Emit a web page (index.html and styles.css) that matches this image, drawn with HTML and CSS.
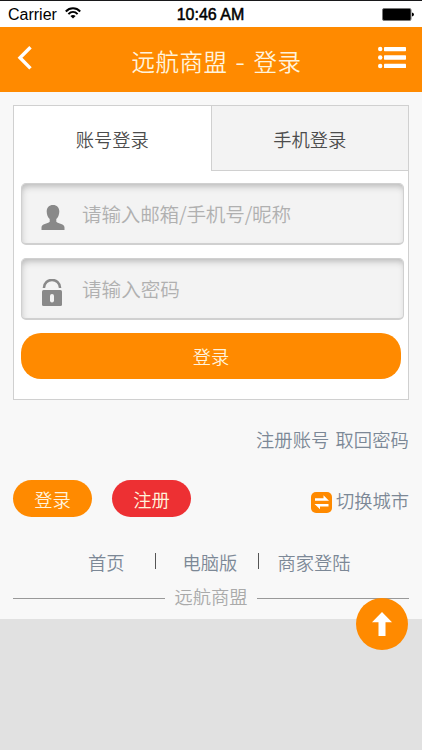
FILE: index.html
```html
<!DOCTYPE html>
<html lang="zh-CN">
<head>
<meta charset="utf-8">
<title>远航商盟 - 登录</title>
<link rel="stylesheet" href="styles.css">
</head>
<body>
<div class="status">
  <div class="carrier"><span>Carrier</span>
    <svg width="16" height="12" viewBox="0 0 16 12" fill="none" stroke="#000" stroke-width="2"><path d="M.8 4.500C4.900.300 11.100.300 15.200 4.500M3.400 7.100c2.700-2.700 6.500-2.700 9.200 0"/><path d="M8 11.600 5.400 9Q8 6.900 10.600 9Z" fill="#000" stroke="none"/></svg>
  </div>
  <span class="time">10:46 AM</span>
  <svg class="battery" width="32" height="13" viewBox="0 0 32 13"><rect x=".5" y=".5" width="28.5" height="12" rx="1.5" fill="#000" stroke="#777"/><path d="M30 4.500q2 .3 2 2t-2 2z"/></svg>
</div>
<header class="header">
  <svg class="back" width="16" height="24" viewBox="0 0 16 24" fill="none" stroke="#fff" stroke-width="3.4"><path d="M14.500 1.200 4 11.800l10.500 10.600"/></svg>
  <h1>远航商盟 <b>-</b> 登录</h1>
  <svg class="menu" width="28" height="23" viewBox="0 0 28 23" fill="#fff"><circle cx="2.2" cy="3" r="2.2"/><circle cx="2.2" cy="11.5" r="2.2"/><circle cx="2.2" cy="20" r="2.2"/><rect x="6" y="0.9" width="22" height="4.4" rx=".7"/><rect x="6" y="9.3" width="22" height="4.4" rx=".7"/><rect x="6" y="17.7" width="22" height="4.4" rx=".7"/></svg>
</header>
<main class="page">
  <section class="card">
    <nav class="tabs"><a class="tab">账号登录</a><a class="tab off">手机登录</a></nav>
    <form class="form">
      <div class="field">
        <svg width="24" height="25" viewBox="0 0 24 25" fill="#898989"><path d="M12 0c3.900 0 6.300 2.500 6.300 6.500 0 3.200-1.300 6-3 7.500v2.700c2 2 8.200 2 8.200 5.800V25H.5v-2.500c0-3.800 6.200-3.800 8.200-5.800V14c-1.700-1.500-3-4.300-3-7.500C5.700 2.500 8.100 0 12 0Z"/></svg>
        <span class="wide">请输入邮箱/手机号/昵称</span>
      </div>
      <div class="field">
        <svg width="24" height="27" viewBox="0 0 24 27"><path d="M2.900 9C3.200-1.700 18.800-1.700 19.100 9" fill="none" stroke="#898989" stroke-width="2.5"/><rect x="1" y="11" width="20" height="16" rx="1.5" fill="#898989"/><rect x="9" y="15" width="4" height="8.5" rx="2" fill="#f3f3f3"/></svg>
        <span>请输入密码</span>
      </div>
      <div class="submit">登录</div>
    </form>
  </section>
  <div class="links"><a>注册账号</a><a>取回密码</a></div>
  <div class="actions">
    <a class="pill">登录</a><a class="pill red">注册</a>
    <a class="city"><svg width="21" height="21" viewBox="0 0 21 21"><rect width="21" height="21" rx="5" fill="#ff8a00"/><path d="M4 6.200H12.500V3.200L18 8.800H4ZM17.500 14.500H9v2.800L3.500 11.900h14Z" fill="#fff"/></svg><span>切换城市</span></a>
  </div>
  <nav class="bottom"><a>首页</a><i></i><a>电脑版</a><i></i><a>商家登陆</a></nav>
  <div class="brand">远航商盟</div>
</main>
<a class="top"><svg width="20" height="24" viewBox="0 0 20 24"><path d="M10 0 20 10.300h-6.500V24h-7V10.300H0Z" fill="#fff"/></svg></a>
</body>
</html>
```
FILE: styles.css
```css
* { box-sizing: border-box; }
body {
  margin: 0;
  height: 750px;
  overflow: hidden;
  background: #e1e1e1;
  font: 350 18.3px/26px "Noto Sans CJK SC DemiLight", "Noto Sans CJK SC", sans-serif;
  color: #7c8896;
}
svg { display: block; flex: none; }
.status {
  height: 27px;
  border-top: 1px solid #18181a;
  background: #fff;
  display: grid;
  grid-template-columns: 1fr auto 1fr;
  align-items: center;
  padding: 1px 8px 0;
  color: #000;
  font: 400 16px/20px "Liberation Sans", sans-serif;
}
.carrier { display: flex; align-items: center; gap: 8px; }
.carrier svg { margin-top: -3px; }
.time { -webkit-text-stroke: .5px #000; margin-right: 1px; }
.battery { justify-self: end; }
.header {
  height: 65px;
  background: #ff8a00;
  display: flex;
  align-items: center;
  justify-content: space-between;
  padding: 0 16px;
  color: #fff3dc;
}
.header h1 { margin: 3px 0 0 23px; font-size: 23.5px; font-weight: 350; line-height: 34px; letter-spacing: .5px; word-spacing: 3px; }
.header b { display: inline-block; font-weight: 400; transform: scaleX(1.2); }
.back { margin-top: -3px; }
.menu { margin-top: -5px; }
.page { height: 527px; background: #f8f8f8; padding: 13px 13px 0; }
.card { height: 295px; width: 396px; border: 1px solid #d0d0d0; background: #fff; }
.tabs { display: flex; height: 65px; }
.tab { flex: 1; text-align: center; line-height: 66px; color: #4c4c4c; font-weight: 400; }
.off { background: #f3f3f3; border-left: 1px solid #d0d0d0; border-bottom: 1px solid #d0d0d0; }
.form { padding: 12px 4px 0 7px; }
.field {
  height: 62px;
  margin-bottom: 13px;
  border: 1px solid #d0d0d0;
  border-bottom-width: 2px;
  border-radius: 5px;
  background: #f3f3f3;
  box-shadow: inset 1px 4px 7px -2px #b4b4b4;
  display: flex;
  align-items: center;
  gap: 17px;
  padding-left: 19px;
  color: #b0b0b0;
  font-size: 19.6px;
}
.field svg { margin-top: 7px; }
.wide { letter-spacing: -.2px; }
.submit { width: 380px; height: 46px; border-radius: 20px; background: #ff8a00; color: #fff3dc; font-weight: 400; text-align: center; line-height: 46px; }
.links { display: flex; justify-content: flex-end; gap: 6px; margin-top: 26px; letter-spacing: .1px; }
.actions { display: flex; margin-top: 28px; height: 37px; }
.pill { width: 79px; height: 37px; margin-right: 20px; border-radius: 19px; background: #ff8a00; color: #fff3dc; text-align: center; line-height: 38px; }
.red { background: #ed3033; }
.city { display: flex; gap: 4px; margin-left: auto; line-height: 40px; }
.city svg { margin-top: 12px; }
.bottom { display: flex; margin: 32px 0 0 75px; }
.bottom i { width: 1px; height: 16px; background: #555; margin: 4px 27px 0 30px; }
.bottom i:nth-of-type(2) { margin: 4px 18px 0 21px; }
.brand { display: flex; align-items: center; gap: 9px; margin-top: 8px; color: #aaa; }
.brand::before, .brand::after { content: ""; flex: 1; height: 1px; background: #999; margin-top: 5px; }
.top { position: absolute; left: 356px; top: 598px; width: 52px; height: 52px; border-radius: 50%; background: #ff8a00; display: grid; place-items: center; }
```
